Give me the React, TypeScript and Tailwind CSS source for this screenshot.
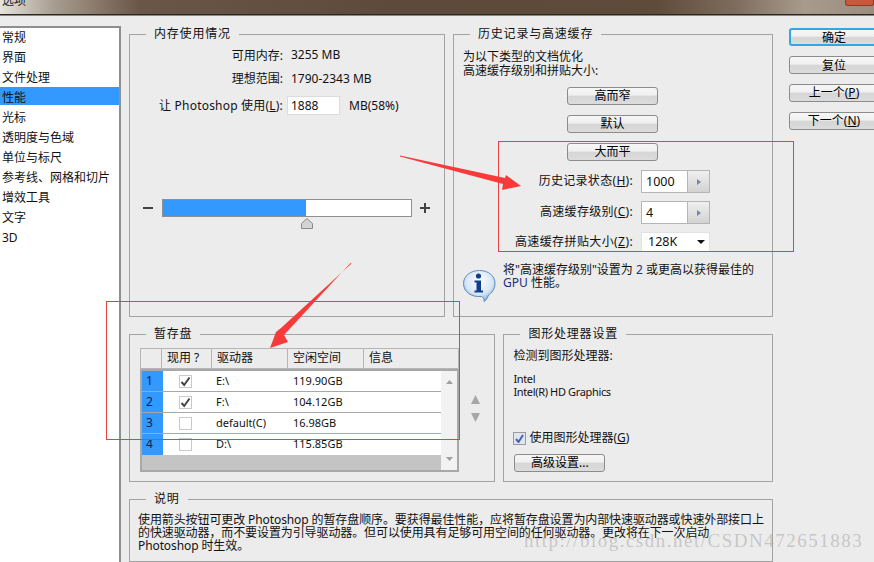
import React from "react";

const BTN = "flex items-center justify-center rounded-[3px] border border-[#8c8c8c] bg-[linear-gradient(#f6f6f6_0%,#f0f0f0_45%,#d6d6d6_50%,#dcdcdc_100%)] text-black leading-none";

function Btn({ children, cls = "" }: { children: React.ReactNode; cls?: string }) {
  return <div className={`${BTN} ${cls}`}>{children}</div>;
}

function Panel({ title, cls, children }: { title: string; cls: string; children: React.ReactNode }) {
  return (
    <fieldset className={`border border-[#a3a3a3] ${cls}`}>
      <legend className="ml-4 px-2 h-4 leading-4 tracking-[0.8px]">{title}</legend>
      {children}
    </fieldset>
  );
}

function Check({ on, cls = "" }: { on: boolean; cls?: string }) {
  return (
    <div className={`w-[13px] h-[13px] border border-[#c9c9c9] bg-white flex items-center justify-center ${cls}`}>
      {on && (
        <svg width="11" height="11" viewBox="0 0 11 11">
          <path d="M1.5 6 L4.2 9 L9.5 1.5" fill="none" stroke="#444" strokeWidth="2" />
        </svg>
      )}
    </div>
  );
}

function Spin({ label, value }: { label: React.ReactNode; value: string }) {
  return (
    <div className="flex items-center h-[23px]">
      <div className="w-[179px] text-right pb-[2px] tracking-[0.3px] whitespace-nowrap">{label}</div>
      <div className="ml-[8px] w-[69px] h-[23px] flex border border-[#b5b5b5] bg-white">
        <div className="flex-1 pl-1 leading-[21px] text-[12.5px]">{value}</div>
        <div className="w-[22px] border-l border-[#b5b5b5] bg-[linear-gradient(#f0f0f0,#d2d2d2)] flex items-center justify-center">
          <svg width="4" height="6" viewBox="0 0 4 6"><path d="M0 0 L4 3 L0 6 Z" fill="#7186a8" /></svg>
        </div>
      </div>
    </div>
  );
}

const rows = [
  { n: "1", on: true, d: "E:\\", s: "119.90GB" },
  { n: "2", on: true, d: "F:\\", s: "104.12GB" },
  { n: "3", on: false, d: "default(C)", s: "16.98GB" },
  { n: "4", on: false, d: "D:\\", s: "115.85GB" },
];

const nav = ["常规", "界面", "文件处理", "性能", "光标", "透明度与色域", "单位与标尺", "参考线、网格和切片", "增效工具", "文字", "3D"];

const line1 = "使用箭头按钮可更改 Photoshop 的暂存盘顺序。要获得最佳性能\uFF0C应将暂存盘设置为内部快速驱动器或快速外部接口上";
const line2 = "的快速驱动器\uFF0C而不要设置为引导驱动器。但可以使用具有足够可用空间的任何驱动器。更改将在下一次启动";

export default function App() {
  return (
    <div className="relative w-[874px] h-[562px] overflow-hidden bg-[#ececec] text-[12px] text-[#111] font-['Noto_Sans','Noto_Sans_CJK_SC',sans-serif]">
      {/* title bar */}
      <div className="h-[14px] flex items-start overflow-hidden bg-[linear-gradient(90deg,#e6e3dd_0%,#a99e92_6%,#6a5646_16%,#5e4a3a_45%,#5f4b3a_75%,#7d6c5c_84%,#a89b8d_92%,#9a8c7e_100%)]">
        <div className="pl-[2px] -mt-[7px] leading-4 text-[#222]">选项</div>
        <div className="ml-auto w-[29px] h-[6px] rounded-b-[3px] border border-t-0 border-[#8a3a28] bg-[#c9583a]" />
      </div>
      <div className="h-[1px] bg-[#2b2622]" />
      <div className="h-[1px] bg-[#8c8882]" />

      <div className="flex h-[546px] pt-[10px]">
        {/* sidebar */}
        <div className="w-[121px] shrink-0 bg-white border-t-2 border-r-2 border-[#8f8f8f]">
          <div className="-mt-[1px]">
            {nav.map((t) => (
              <div key={t} className="h-5 pl-[2px]">
                <div className={`h-[18px] -ml-[2px] pl-[2px] leading-[22px] whitespace-nowrap ${t === "性能" ? "bg-[#3399ff]" : ""}`}>{t}</div>
              </div>
            ))}
          </div>
        </div>

        {/* main column */}
        <div className="ml-[8px] w-[644px] shrink-0 flex flex-col gap-[9px]">
          <div className="flex gap-2 h-[291px]">
            <Panel title="内存使用情况" cls="w-[316px] h-[291px]">
              <div className="pt-[5px] grid grid-cols-[153px_auto] gap-x-[5px] justify-start items-center">
                <div className="text-right h-4 leading-[18px]">可用内存:</div>
                <div className="pl-[3px] h-4 leading-4">3255 MB</div>
                <div className="text-right h-4 leading-4 mt-2">理想范围:</div>
                <div className="pl-[3px] h-4 leading-4 mt-2">1790-2343 MB</div>
                <div className="text-right h-[19px] leading-[19px] mt-[9px] whitespace-nowrap tracking-[0.2px]">让 Photoshop 使用(<u>L</u>):</div>
                <div className="flex items-center mt-[9px] -ml-[1px]">
                  <div className="w-[53px] h-[19px] bg-white border border-[#dcdcdc] pl-[3px] leading-[18px]">1888</div>
                  <div className="ml-[9px]">MB(58%)</div>
                </div>
              </div>
              <div className="mt-[84px] flex items-center pl-[13px]">
                <div className="w-[10px] h-[2px] bg-[#444]" />
                <div className="relative ml-[9px] w-[250px] h-[18px] border border-[#8f8f8f] bg-white">
                  <div className="h-full w-[143px] bg-[#3399ff]" />
                  <svg className="absolute left-[138px] top-[18px]" width="12" height="11" viewBox="0 0 12 11">
                    <path d="M6 .5 L11.5 5.5 V10.5 H.5 V5.5 Z" fill="#d4d4d4" stroke="#8a8a8a" />
                  </svg>
                </div>
                <svg className="ml-[8px]" width="10" height="10" viewBox="0 0 10 10">
                  <path d="M0 5 H10 M5 0 V10" stroke="#444" strokeWidth="2" />
                </svg>
              </div>
            </Panel>

            <Panel title="历史记录与高速缓存" cls="w-[320px] h-[291px]">
              <div className="pl-[9px] pt-[8px] leading-[14px]">
                <div>为以下类型的文档优化</div>
                <div>高速缓存级别和拼贴大小:</div>
              </div>
              <div className="mt-[9px] pl-[113px] flex flex-col gap-[10px]">
                <Btn cls="w-[91px] h-[18px]">高而窄</Btn>
                <Btn cls="w-[91px] h-[18px]">默认</Btn>
                <Btn cls="w-[91px] h-[18px]">大而平</Btn>
              </div>
              <div className="mt-[9px] flex flex-col gap-2">
                <Spin label={<>历史记录状态(<u>H</u>):</>} value="1000" />
                <Spin label={<>高速缓存级别(<u>C</u>):</>} value="4" />
                <div className="flex items-center h-5">
                  <div className="w-[179px] text-right tracking-[0.4px] whitespace-nowrap">高速缓存拼贴大小(<u>Z</u>):</div>
                  <div className="ml-2 w-[69px] h-5 bg-white border border-[#e2e2e2] flex items-center pl-[6px] text-[12.5px]">
                    128K
                    <svg className="ml-auto mr-[4px]" width="8" height="4" viewBox="0 0 8 4"><path d="M0 0 H8 L4 4 Z" fill="#111" /></svg>
                  </div>
                </div>
              </div>
              <div className="flex mt-[17px] pl-[9px]">
                <svg width="33" height="32" viewBox="0 0 33 32" className="shrink-0 mt-[1px]">
                  <defs>
                    <radialGradient id="ib" cx="0.5" cy="0.35" r="0.7">
                      <stop offset="0" stopColor="#ffffff" />
                      <stop offset="0.6" stopColor="#d7e6f6" />
                      <stop offset="1" stopColor="#6f9fd4" />
                    </radialGradient>
                  </defs>
                  <path d="M16.5 .5 C25.5 .5 32 6 32 13.5 C32 19 28.5 23.5 25.5 25 C24.5 28 23 30.5 21 31.5 C21.5 29 20.5 27.5 18.5 26.5 C8 27.5 .5 21.5 .5 13.5 C.5 6 7.5 .5 16.5 .5 Z" fill="url(#ib)" stroke="#5c8cc0" />
                  <circle cx="15.5" cy="6" r="2.6" fill="#123f8c" />
                  <path d="M11.5 10.5 H18 V20.5 H20 V22.5 H11.5 V20.5 H13.5 V12.5 H11.5 Z" fill="#123f8c" />
                </svg>
                <div className="ml-[7px] -mt-[6px] leading-[13px]">
                  <div>将"高速缓存级别"设置为 <span className="text-[#1a2f80]">2</span> 或更高以获得最佳的</div>
                  <div><span className="text-[#1a2f80]">GPU</span> 性能。</div>
                </div>
              </div>
            </Panel>
          </div>

          <div className="flex gap-2 h-[156px]">
            <Panel title="暂存盘" cls="w-[367px] h-[156px]">
              <div className="flex pl-[10px] pt-[6px]">
                <div className="w-[319px] shrink-0">
                  <div className="flex h-[21px] border border-[#b5b5b5] bg-[#ececec] leading-[17px]">
                    <div className="w-[21px] border-r border-[#b5b5b5]" />
                    <div className="w-[50px] border-r border-[#b5b5b5] pl-[5px] whitespace-nowrap">现用 ?</div>
                    <div className="w-[76px] border-r border-[#b5b5b5] pl-[5px]">驱动器</div>
                    <div className="w-[76px] border-r border-[#b5b5b5] pl-[5px]">空闲空间</div>
                    <div className="flex-1 pl-[5px]">信息</div>
                  </div>
                  <div className="flex h-[103px] border-2 border-[#a8a8a8] border-t-2">
                    <div className="flex-1 flex flex-col bg-[#c4c4c4]">
                      {rows.map((r) => (
                        <div key={r.n} className="flex h-[21px] bg-white border-b border-[#a8a8a8] last:border-b-0 leading-[20px] text-[11px]">
                          <div className="w-[21px] bg-[#3399ff] pl-[4px] text-[#102040] text-[12px]">{r.n}</div>
                          <div className="w-[45px] flex items-center justify-center"><Check on={r.on} /></div>
                          <div className="w-[77px] pl-[8px]">{r.d}</div>
                          <div className="pl-[8px]">{r.s}</div>
                        </div>
                      ))}
                    </div>
                    <div className="w-[16px] bg-[#f2f2f2] flex flex-col items-center justify-between py-[9px]">
                      <svg width="7" height="4" viewBox="0 0 7 4"><path d="M3.5 0 L7 4 H0 Z" fill="#a0a0a0" /></svg>
                      <svg width="7" height="4" viewBox="0 0 7 4"><path d="M0 0 H7 L3.5 4 Z" fill="#a0a0a0" /></svg>
                    </div>
                  </div>
                </div>
                <div className="ml-[12px] mt-[47px] flex flex-col gap-[9px]">
                  <svg width="9" height="9" viewBox="0 0 9 9"><path d="M4.5 0 L9 9 H0 Z" fill="#a6a6a6" /></svg>
                  <svg width="9" height="9" viewBox="0 0 9 9"><path d="M0 0 H9 L4.5 9 Z" fill="#a6a6a6" /></svg>
                </div>
              </div>
            </Panel>

            <Panel title="图形处理器设置" cls="w-[270px] h-[156px]">
              <div className="pl-[9px] pt-[7px] leading-[14px]">
                <div>检测到图形处理器:</div>
                <div className="mt-[9px] leading-[13px] text-[11px] tracking-[-0.35px]">Intel</div>
                <div className="leading-[13px] text-[11px] tracking-[-0.35px]">Intel(R) HD Graphics</div>
                <div className="mt-[33px] flex items-center h-[14px]">
                  <div className="w-[13px] h-[13px] border border-[#9a9a9a] bg-[#dfe6f2] flex items-center justify-center">
                    <svg width="9" height="9" viewBox="0 0 9 9"><path d="M1 5 L3.5 8 L8 1" fill="none" stroke="#4a63a8" strokeWidth="2" /></svg>
                  </div>
                  <div className="ml-[3px]">使用图形处理器(<u>G</u>)</div>
                </div>
                <Btn cls="w-[91px] h-[18px] mt-[9px] ml-[1px]">高级设置...</Btn>
              </div>
            </Panel>
          </div>

          <Panel title="说明" cls="w-[644px] h-[120px]">
            <div className="pl-[8px] pt-[6px] leading-[13px] whitespace-nowrap tracking-[-0.1px]">
              <div>{line1}</div>
              <div>{line2}</div>
              <div>Photoshop 时生效。</div>
            </div>
          </Panel>
        </div>

        {/* right buttons */}
        <div className="ml-4 mt-[2px] flex flex-col gap-[10px] w-[90px] shrink-0">
          <Btn cls="h-[18px] !border-[#2fa8e6] border-2 pt-[1px]">确定</Btn>
          <Btn cls="h-[18px] pt-[1px]">复位</Btn>
          <Btn cls="h-[18px]">上一个(<u>P</u>)</Btn>
          <Btn cls="h-[18px]">下一个(<u>N</u>)</Btn>
        </div>
      </div>

      {/* annotations laid over the screenshot */}
      <div className="absolute left-[498px] top-[141px] w-[296px] h-[111px] border border-[#e84040]" />
      <div className="absolute left-[106px] top-[301px] w-[354px] h-[139px] border border-[#e84040]" />
      <svg className="absolute left-0 top-0 pointer-events-none" width="874" height="562">
        <polygon points="400,155.5 505,178 506,175 521,186 502,190 503,184 400,156.5" fill="#f93a3a" />
        <polygon points="350.5,263 284,335 288,342 270,348 276,332 281,328 351.5,263.5" fill="#f93a3a" />
      </svg>
      <div className="absolute left-[524px] top-[529px] text-[19px] leading-6 tracking-[1.5px] text-[#8a8a8a]/40 font-['Liberation_Serif',serif] whitespace-nowrap">
        http://blog.csdn.net/CSDN472651883
      </div>
    </div>
  );
}
